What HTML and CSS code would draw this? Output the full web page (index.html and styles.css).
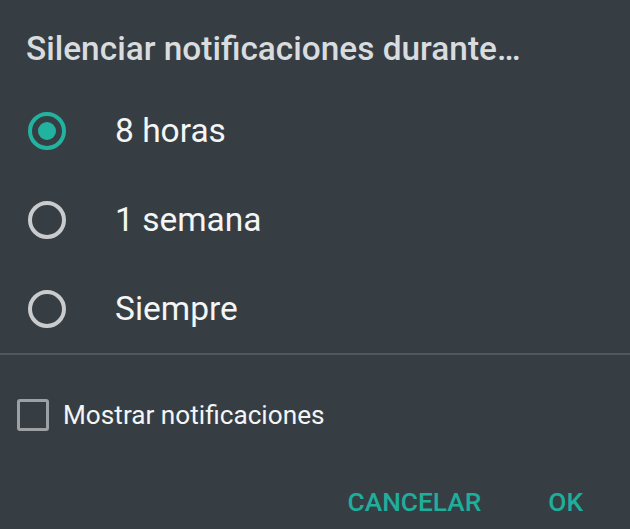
FILE: index.html
```html
<!DOCTYPE html>
<html lang="es">
<head>
<meta charset="utf-8">
<title>Silenciar notificaciones</title>
<link rel="stylesheet" href="styles.css">
</head>
<body>
<div class="dialog">
  <h1 class="dialog-title">Silenciar notificaciones durante…</h1>
  <ul class="options">
    <li class="option">
      <span class="radio radio-on"><span class="radio-dot"></span></span>
      <span class="option-label">8 horas</span>
    </li>
    <li class="option">
      <span class="radio"></span>
      <span class="option-label">1 semana</span>
    </li>
    <li class="option">
      <span class="radio"></span>
      <span class="option-label">Siempre</span>
    </li>
  </ul>
  <div class="divider"></div>
  <div class="check-row">
    <span class="checkbox"></span>
    <span class="check-label">Mostrar notificaciones</span>
  </div>
  <div class="actions">
    <span class="action">CANCELAR</span>
    <span class="action">OK</span>
  </div>
</div>
</body>
</html>
```
FILE: styles.css
```css
html, body {
  margin: 0;
  padding: 0;
  background: #363e44;
}

.dialog {
  width: 630px;
  height: 529px;
  font-family: Roboto, "Noto Sans", sans-serif;
  color: #f2f3f3;
  overflow: hidden;
}

.dialog-title {
  margin: 0;
  padding: 29px 0 0 26px;
  font-size: 33.4px;
  line-height: 40px;
  font-weight: 500;
  color: #d9dcde;
}

.options {
  list-style: none;
  margin: 17px 0 0;
  padding: 0;
}

.option {
  height: 89px;
  display: flex;
  align-items: center;
  padding-left: 28px;
}

.radio {
  box-sizing: border-box;
  width: 38px;
  height: 38px;
  border-radius: 50%;
  border: 4px solid #c9cbcc;
  display: flex;
  align-items: center;
  justify-content: center;
  flex: none;
}

.radio-on {
  border-color: #21b3a0;
}

.radio-dot {
  width: 18px;
  height: 18px;
  border-radius: 50%;
  background: #21b3a0;
}

.option-label {
  margin-left: 49px;
  font-size: 33.5px;
  color: #f4f5f5;
}

.divider {
  height: 2px;
  background: #4f585e;
}

.check-row {
  height: 60px;
  margin-top: 30px;
  display: flex;
  align-items: center;
  padding-left: 17px;
}

.checkbox {
  box-sizing: border-box;
  width: 32px;
  height: 32px;
  border: 3px solid #9da1a4;
  border-radius: 3px;
  flex: none;
}

.check-label {
  margin-left: 14px;
  font-size: 26.2px;
  color: #f4f5f5;
}

.actions {
  height: 50px;
  margin-top: 32px;
  display: flex;
  align-items: center;
  justify-content: flex-end;
  gap: 67px;
  padding-right: 47px;
}

.action {
  font-size: 26.3px;
  font-weight: 500;
  color: #1eae9b;
}
```
